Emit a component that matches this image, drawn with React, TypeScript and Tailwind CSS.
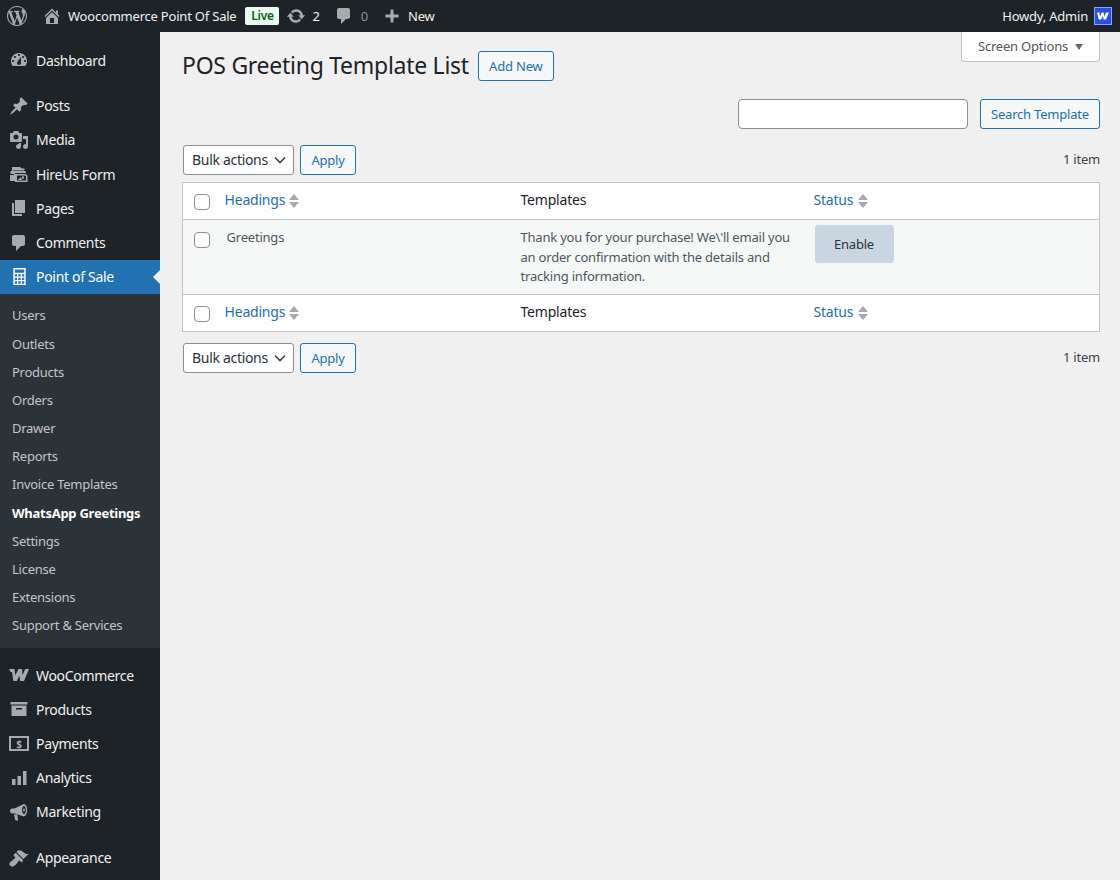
import type { ReactNode } from "react";

const P = {
  wordpress:
    "M20 10c0-5.51-4.49-10-10-10C4.48 0 0 4.49 0 10c0 5.52 4.48 10 10 10 5.51 0 10-4.48 10-10zM7.78 15.37L4.37 6.22c.55-.02 1.17-.08 1.17-.08.5-.06.44-1.13-.06-1.11 0 0-1.45.11-2.37.11-.18 0-.37 0-.58-.01C4.12 2.69 6.87 1.11 10 1.11c2.33 0 4.45.87 6.05 2.34-.68-.11-1.65.39-1.65 1.58 0 .74.45 1.36.9 2.1.35.61.55 1.36.55 2.46 0 1.49-1.4 5-1.4 5l-3.03-8.37c.54-.02.82-.17.82-.17.5-.05.44-1.25-.06-1.22 0 0-1.44.12-2.38.12-.87 0-2.33-.12-2.33-.12-.5-.03-.56 1.2-.06 1.22l.92.08 1.26 3.41zM17.41 10c.24-.64.74-1.87.43-4.25.7 1.29 1.05 2.71 1.05 4.25 0 3.29-1.73 6.24-4.4 7.78.97-2.59 1.94-5.2 2.92-7.78zM6.1 18.09C3.12 16.65 1.11 13.53 1.11 10c0-1.3.23-2.48.72-3.59C3.25 10.3 4.67 14.2 6.1 18.09zm4.03-6.63l2.58 6.98c-.86.29-1.76.45-2.71.45-.79 0-1.57-.11-2.29-.33.81-2.38 1.62-4.74 2.42-7.1z",
  home: "M16 8.5l1.53 1.53-1.06 1.06L10 4.62l-6.47 6.47-1.06-1.06L10 2.5l4 4v-2h2v4zm-6-2.46l6 5.99V18H4v-5.97zM12 17v-5H8v5h4z",
  update:
    "M10.2 3.28c3.53 0 6.43 2.61 6.92 6h2.08l-3.5 4-3.5-4h2.32c-.45-1.97-2.21-3.45-4.32-3.45-1.45 0-2.73.71-3.54 1.78L4.95 5.66C6.23 4.2 8.11 3.28 10.2 3.28zm-.4 13.44c-3.52 0-6.43-2.61-6.92-6H.8l3.5-4c1.17 1.33 2.33 2.67 3.5 4H5.48c.45 1.97 2.21 3.45 4.32 3.45 1.45 0 2.73-.71 3.54-1.78l1.71 1.95c-1.28 1.46-3.15 2.38-5.25 2.38z",
  comment:
    "M5 2h9c1.1 0 2 .9 2 2v7c0 1.1-.9 2-2 2h-2l-5 5v-5H5c-1.1 0-2-.9-2-2V4c0-1.1.9-2 2-2z",
  plus: "M8.5 3.5h3v5h5v3h-5v5h-3v-5h-5v-3h5z",
  dashboard:
    "M3.76 16h12.48c1.1-1.37 1.76-3.11 1.76-5 0-4.42-3.58-8-8-8s-8 3.58-8 8c0 1.89.66 3.63 1.76 5zM10 4c.55 0 1 .45 1 1s-.45 1-1 1-1-.45-1-1 .45-1 1-1zM6 6c.55 0 1 .45 1 1s-.45 1-1 1-1-.45-1-1 .45-1 1-1zm8 0c.55 0 1 .45 1 1s-.45 1-1 1-1-.45-1-1 .45-1 1-1zm-5.37 5.55L12 7v6c0 1.1-.9 2-2 2s-2-.9-2-2c0-.57.24-1.08.63-1.45zM4 10c.55 0 1 .45 1 1s-.45 1-1 1-1-.45-1-1 .45-1 1-1zm12 0c.55 0 1 .45 1 1s-.45 1-1 1-1-.45-1-1 .45-1 1-1z",
  pin: "M10.44 3.02l1.82-1.82 6.36 6.35-1.83 1.82c-1.05-.68-2.48-.57-3.41.36l-.75.75c-.92.93-1.04 2.35-.35 3.41l-1.83 1.82-2.41-2.41-2.8 2.79c-.42.42-3.38 2.71-3.8 2.29s1.86-3.39 2.28-3.81l2.79-2.79L4.1 9.36l1.83-1.82c1.05.69 2.48.57 3.4-.36l.75-.75c.93-.92 1.05-2.35.36-3.41z",
  media:
    "M13 11V4c0-.55-.45-1-1-1h-1.67L9 1H5L3.67 3H2c-.55 0-1 .45-1 1v7c0 .55.45 1 1 1h10c.55 0 1-.45 1-1zM7 4.5c1.38 0 2.5 1.12 2.5 2.5S8.38 9.5 7 9.5 4.5 8.38 4.5 7 5.62 4.5 7 4.5zM14 6h5v10.5c0 1.38-1.12 2.5-2.5 2.5S14 17.88 14 16.5s1.12-2.5 2.5-2.5c.17 0 .34.02.5.05V9h-3V6zm-4 8.05V13h2v3.5c0 1.38-1.12 2.5-2.5 2.5S7 17.88 7 16.5 8.12 14 9.5 14c.17 0 .34.02.5.05z",
  hire: "M3 3h8l2 1.500h2.500V6H5v1H3V3zM1.500 7H4V6.500h11l2 1.300V9H6v1H1.500V7zM1 11h4v-1h11.500l2 1.500V18H6v-1H1v-6zm7 .500v5h9v-4.500l-1.500-.500H8zm6 .800a1.200 1.200 0 110 2.400 1.200 1.200 0 010-2.400zM9 16l2.500-2.800 2 2.800H9z",
  page: "M6 15V2h10v13H6zm-1 1h8v2H3V5h2v11z",
  calculator:
    "M3.500 1h13v18h-13V1zM5 2.500V6h10V2.500H5zM5 7.500V10h2.500V7.500H5zm3.750 0V10h2.500V7.500h-2.500zm3.750 0V10H15V7.500h-2.500zM5 11.250v2.500h2.500v-2.500H5zm3.750 0v2.500h2.500v-2.500h-2.500zm3.750 0v2.500H15v-2.500h-2.500zM5 15v2.500h2.500V15H5zm3.750 0v2.500h2.500V15h-2.500zm3.750 0v2.500H15V15h-2.500z",
  woo: "M0 4h5.500l.8 6.300L9.500 4H13l.6 6.300L16.200 4H20l-5 12h-3.800l-.9-5.500L8 16H4.300L3 7H1.500z",
  archive: "M1.500 3h17v2.500h-17V3zM2.500 6.500h15V17h-15V6.500zM7 9v1.500h6V9H7z",
  bars: "M3 11h3.500v6H3v-6zm5.500-3H12v9H8.500V8zM14 3h3.500v14H14V3z",
  megaphone:
    "M18.200 8c0 3.200-1.400 6-3.300 6.500L5.500 11.500H3.200C2 11.500 1 10.400 1 9s1-2.500 2.200-2.500h2.300L14.900 2C16.800 2.200 18.200 4.900 18.200 8zM15 4c-1 0-1.900 1.800-1.900 4s.9 4 1.900 4 1.900-1.800 1.900-4S16 4 15 4zm0 2.500c.5 0 .9.700.9 1.500s-.4 1.500-.9 1.500-.9-.700-.9-1.500.4-1.500.9-1.500zM5 12.500h3.200l1 5.500c-.1.700-2.700.800-3 .1L5 12.500z",
  appearance:
    "M14.48 11.06L7.41 3.99l1.5-1.5c.5-.56 2.3-.47 3.51.32 1.21.8 1.43 1.28 2.91 2.1 1.18.64 2.45 1.26 4.45.85zm-.71.71L6.7 4.7 4.93 6.47c-.39.39-.39 1.02 0 1.41l1.06 1.06c.39.39.39 1.03 0 1.42-.6.6-1.43 1.11-2.21 1.69-.35.26-.7.53-1.01.84C1.43 13.23.4 14.96.4 15.63c0 .67.16 1.21.95 2.03.79.82 1.37.94 2.04.94.67 0 2.4-1.03 3.73-2.37.31-.31.58-.66.84-1.01.58-.78 1.09-1.61 1.69-2.21.39-.39 1.03-.39 1.42 0l1.06 1.06c.39.39 1.02.39 1.41 0z",
};

function Dash({ d, className }: { d: string; className?: string }) {
  return (
    <svg viewBox="0 0 20 20" fill="currentColor" fillRule="evenodd" className={className} aria-hidden>
      <path d={d} />
    </svg>
  );
}

function MenuItem({ icon, label, active }: { icon: ReactNode; label: string; active?: boolean }) {
  return (
    <div
      className={`relative flex items-center h-[34.2px] text-[14px] tracking-[-0.022em] ${
        active ? "bg-[#2271b1] text-white" : "text-[#f0f0f1]"
      }`}
    >
      <div className={`w-[36px] flex justify-center pl-[2px] ${active ? "text-white" : "text-[#a7aaad]"}`}>{icon}</div>
      <span>{label}</span>
      {active && (
        <span className="absolute right-0 top-[10px] border-y-[7px] border-r-[7px] border-y-transparent border-r-[#f0f0f1]" />
      )}
    </div>
  );
}

const subItems = [
  "Users",
  "Outlets",
  "Products",
  "Orders",
  "Drawer",
  "Reports",
  "Invoice Templates",
  "WhatsApp Greetings",
  "Settings",
  "License",
  "Extensions",
  "Support & Services",
];

function Sidebar() {
  const ic = "w-5 h-5";
  return (
    <aside className="w-[160px] shrink-0 bg-[#1d2327] pt-[11px] overflow-hidden">
      <MenuItem icon={<Dash d={P.dashboard} className={ic} />} label="Dashboard" />
      <div className="h-[11.5px]" />
      <MenuItem icon={<Dash d={P.pin} className={ic} />} label="Posts" />
      <MenuItem icon={<Dash d={P.media} className={ic} />} label="Media" />
      <MenuItem icon={<Dash d={P.hire} className={ic} />} label="HireUs Form" />
      <MenuItem icon={<Dash d={P.page} className={ic} />} label="Pages" />
      <MenuItem icon={<Dash d={P.comment} className={ic} />} label="Comments" />
      <MenuItem icon={<Dash d={P.calculator} className="w-[19px] h-[19px]" />} label="Point of Sale" active />
      <div className="bg-[#2c3338] pt-[7.5px] pb-[8.5px]">
        {subItems.map((s) => (
          <div
            key={s}
            className={`px-3 py-[5px] text-[13px] leading-[1.4] tracking-[-0.02em] ${
              s === "WhatsApp Greetings" ? "font-bold text-white" : "text-[#c3c4c7]"
            }`}
          >
            {s}
          </div>
        ))}
      </div>
      <div className="h-[10px]" />
      <MenuItem icon={<Dash d={P.woo} className={ic} />} label="WooCommerce" />
      <MenuItem icon={<Dash d={P.archive} className={ic} />} label="Products" />
      <MenuItem
        icon={
          <span className="flex items-center justify-center w-5 h-[15px] border-2 border-[#a7aaad] text-[10px] leading-none font-bold">
            $
          </span>
        }
        label="Payments"
      />
      <MenuItem icon={<Dash d={P.bars} className={ic} />} label="Analytics" />
      <MenuItem icon={<Dash d={P.megaphone} className={ic} />} label="Marketing" />
      <div className="h-[11.5px]" />
      <MenuItem icon={<Dash d={P.appearance} className={ic} />} label="Appearance" />
    </aside>
  );
}

function AdminBar() {
  return (
    <header className="h-8 shrink-0 bg-[#1d2327] flex items-center text-[13px] tracking-[-0.016em] text-[#f0f0f1]">
      <Dash d={P.wordpress} className="w-[20px] h-[20px] ml-[7px] text-[#a7aaad]" />
      <Dash d={P.home} className="w-[20px] h-[20px] ml-[15px] text-[#a7aaad]" />
      <span className="ml-[6px] pt-px">Woocommerce Point Of Sale</span>
      <span className="ml-[9px] w-[34px] h-[18px] rounded-[2px] bg-[#edfaef] text-[#00631c] text-[12px] font-semibold flex items-center justify-center">
        Live
      </span>
      <Dash d={P.update} className="w-[20px] h-[20px] ml-[7px] text-[#a7aaad]" />
      <span className="ml-[6px] pt-px">2</span>
      <Dash d={P.comment} className="w-[20px] h-[20px] ml-[14px] text-[#a7aaad]" />
      <span className="ml-[7px] pt-px text-[#8c8f94]">0</span>
      <Dash d={P.plus} className="w-[20px] h-[20px] ml-[14px] text-[#a7aaad]" />
      <span className="ml-[6px] pt-px">New</span>
      <span className="ml-auto pt-px">Howdy, Admin</span>
      <span className="ml-[6px] mr-[8px] w-[18px] h-[18px] bg-[#2b4fe3] border border-[#8ea2ee] flex items-center justify-center">
        <svg viewBox="0 0 20 12" className="w-[12px] h-[8px]" fill="#fff" aria-hidden>
          <path d="M0 0h4l1 7 3-7h3l1 7 3-7h5l-5 12h-4l-1-6-3 6H3z" />
        </svg>
      </span>
    </header>
  );
}

function OutlineButton({ children, className = "" }: { children: ReactNode; className?: string }) {
  return (
    <button
      type="button"
      className={`h-[30px] pt-px rounded-[3px] border border-[#2271b1] bg-[#f6f7f7] text-[#2271b1] text-[13px] tracking-[-0.016em] flex items-center justify-center ${className}`}
    >
      {children}
    </button>
  );
}

function BulkBar() {
  return (
    <div className="flex items-center h-[30px]">
      <div className="ml-px w-[111px] h-[30px] rounded-[3px] border border-[#8c8f94] bg-white flex items-center justify-between pl-2 pr-[7px] pb-[2px] text-[14px] tracking-[-0.022em] text-[#2c3338]">
        <span>Bulk actions</span>
        <svg viewBox="0 0 12 8" className="w-[12px] h-[8px] mt-[2px]" fill="none" stroke="#3c434a" strokeWidth="1.6" aria-hidden>
          <path d="M1 1.500l5 5 5-5" />
        </svg>
      </div>
      <OutlineButton className="ml-[6px] w-[56px]">Apply</OutlineButton>
      <span className="ml-auto text-[13px] tracking-[-0.016em] text-[#3c434a]">1 item</span>
    </div>
  );
}

function Check() {
  return <span className="block w-4 h-4 rounded-[4px] border border-[#8c8f94] bg-white" />;
}

function SortArrows({ className }: { className: string }) {
  return (
    <span className={`mt-[2px] inline-flex flex-col gap-[2px] ${className}`}>
      <span className="border-x-[5px] border-b-[6px] border-x-transparent border-b-[#a7aaad]" />
      <span className="border-x-[5px] border-t-[6px] border-x-transparent border-t-[#a7aaad]" />
    </span>
  );
}

function HeadRow({ border }: { border: string }) {
  return (
    <tr className={`h-[37px] bg-white ${border}`}>
      <td className="pl-[11px] pr-0 align-middle">
        <div className="pt-[2px]">
          <Check />
        </div>
      </td>
      <td className="pl-[10px] pb-[3px]">
        <span className="flex items-center text-[14px] tracking-[-0.014em] text-[#2271b1]">
          Headings
          <SortArrows className="ml-[4px]" />
        </span>
      </td>
      <td className="pl-[10px] pb-[3px] text-[14px] tracking-[-0.014em] text-[#1d2327]">Templates</td>
      <td className="pl-[11px] pb-[3px]">
        <span className="flex items-center text-[14px] tracking-[-0.014em] text-[#2271b1]">
          Status
          <SortArrows className="ml-[5px]" />
        </span>
      </td>
    </tr>
  );
}

export default function App() {
  return (
    <div className="h-[880px] overflow-hidden flex flex-col bg-[#f0f0f1] font-['Noto_Sans',sans-serif]">
      <AdminBar />
      <div className="flex flex-1 min-h-0">
        <Sidebar />
        <main className="flex-1 pl-[22px] pr-5">
          <div className="flex items-start justify-between">
            <div className="flex items-center pt-[19px] h-[49px]">
              <h1 className="text-[23px] leading-[30px] tracking-[-0.012em] text-[#1d2327] -mt-[2px]">POS Greeting Template List</h1>
              <OutlineButton className="ml-[9px] w-[76px]">Add New</OutlineButton>
            </div>
            <div className="w-[139px] h-[30px] bg-white border border-t-0 border-[#c3c4c7] rounded-b-[4px] flex items-center justify-center gap-[7px] text-[13px] tracking-[-0.016em] text-[#50575e]">
              Screen Options
              <span className="border-x-[4.500px] border-t-[6px] border-x-transparent border-t-[#646970]" />
            </div>
          </div>

          <div className="mt-[18px] flex justify-end gap-3">
            <div className="w-[230px] h-[30px] rounded-[4px] border border-[#8c8f94] bg-white" />
            <OutlineButton className="w-[120px]">Search Template</OutlineButton>
          </div>

          <div className="mt-[16px]">
            <BulkBar />
          </div>

          <table className="mt-[7px] w-[918px] table-fixed border-collapse border border-[#c3c4c7]">
            <colgroup>
              <col className="w-[32px]" />
              <col className="w-[296px]" />
              <col className="w-[292px]" />
              <col />
            </colgroup>
            <tbody>
              <HeadRow border="border-b border-[#c3c4c7]" />
              <tr className="h-[75px] bg-[#f6f7f7] align-top">
                <td className="pl-[11px] pt-[12px]">
                  <Check />
                </td>
                <td className="pl-[12px] pt-[8px] text-[13px] tracking-[-0.016em] text-[#50575e]">Greetings</td>
                <td className="pl-[10px] pr-[10px] pt-[8px] text-[13px] tracking-[-0.016em] leading-[19.500px] text-[#50575e]">
                  Thank you for your purchase! We\'ll email you an order confirmation with the details and tracking information.
                </td>
                <td className="pl-[12px] pt-[5px]">
                  <div className="w-[79px] h-[38px] pt-px rounded-[3px] bg-[#c9d6e2] flex items-center justify-center text-[13px] tracking-[-0.016em] text-[#2c3338]">
                    Enable
                  </div>
                </td>
              </tr>
              <HeadRow border="border-t border-[#c3c4c7]" />
            </tbody>
          </table>

          <div className="mt-[11px]">
            <BulkBar />
          </div>
        </main>
      </div>
    </div>
  );
}
